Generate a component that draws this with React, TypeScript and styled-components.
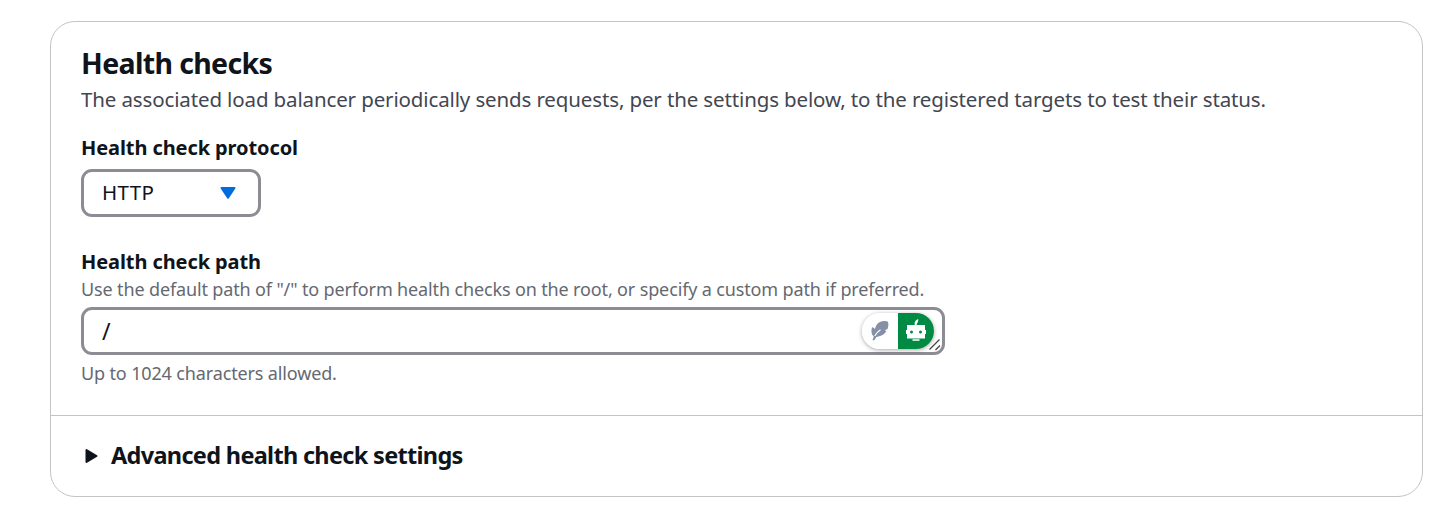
import React from 'react';
import styled, { createGlobalStyle } from 'styled-components';

const GlobalStyle = createGlobalStyle`
  * { box-sizing: border-box; }
  body {
    margin: 0;
    background: #fff;
    color: #0f141a;
    font-family: "Noto Sans", "Open Sans", sans-serif;
  }
`;

const Page = styled.main`
  padding: 21px 21px 18px 50px;
`;

const Panel = styled.section`
  height: 476px;
  display: flex;
  flex-direction: column;
  border: 1px solid #c3c4c7;
  border-radius: 25px;
`;

const Body = styled.div`
  height: 393px;
  padding: 23px 30px 0;
  display: flex;
  flex-direction: column;
  align-items: flex-start;
`;

const Title = styled.h2`
  margin: 0;
  font-size: 28.5px;
  line-height: 36px;
  font-weight: 700;
  white-space: nowrap;
  letter-spacing: -0.65px;
`;

const Description = styled.p`
  margin: 4px 0 0;
  font-size: 20.5px;
  line-height: 28px;
  color: #424650;
  white-space: nowrap;
  letter-spacing: -0.13px;
`;

const Label = styled.label<{ $top: number }>`
  margin-top: ${(p) => p.$top}px;
  font-size: 20px;
  line-height: 28px;
  font-weight: 700;
  white-space: nowrap;
  letter-spacing: -0.09px;
`;

const Hint = styled.span<{ $top: number }>`
  margin-top: ${(p) => p.$top}px;
  font-size: 18px;
  line-height: 24px;
  color: #656871;
  white-space: nowrap;
  letter-spacing: -0.14px;
`;

const Select = styled.button`
  width: 180px;
  height: 48px;
  margin: 7px 0 0;
  padding: 0 22px 0 18px;
  display: flex;
  align-items: center;
  justify-content: space-between;
  border: 3px solid #8c8c94;
  border-radius: 11px;
  background: #fff;
  color: #0f141a;
  font: 400 20.5px/28px "Noto Sans", "Open Sans", sans-serif;
  letter-spacing: 0.4px;
`;

const SelectText = styled.span`
  padding-bottom: 2px;
`;

const Field = styled.div`
  width: 864px;
  height: 48px;
  margin-top: 6px;
  padding: 0 8px 0 18px;
  display: flex;
  align-items: center;
  position: relative;
  border: 3px solid #8c8c94;
  border-radius: 11px;
`;

const Value = styled.span`
  flex: 1;
  font-size: 23px;
  line-height: 28px;
`;

const Assistant = styled.div`
  width: 72px;
  height: 36px;
  display: flex;
  overflow: hidden;
  border-radius: 18px;
  box-shadow: 0 1px 4px rgba(0, 0, 0, 0.35);
`;

const Half = styled.span<{ $fill: string }>`
  flex: 1;
  display: flex;
  align-items: center;
  justify-content: center;
  background: ${(p) => p.$fill};
`;

const Grip = styled.svg`
  position: absolute;
  right: 0;
  bottom: 0;
`;

const Footer = styled.div`
  flex: 1;
  padding: 0 34px;
  display: flex;
  align-items: center;
  gap: 13px;
  border-top: 1px solid #c3c4c7;
`;

const Expander = styled.h3`
  margin: 0;
  padding-bottom: 2px;
  font-size: 23.5px;
  line-height: 30px;
  font-weight: 700;
  white-space: nowrap;
  letter-spacing: -0.69px;
`;

export default function App() {
  return (
    <Page>
      <GlobalStyle />
      <Panel>
        <Body>
          <Title>Health checks</Title>
          <Description>
            The associated load balancer periodically sends requests, per the settings below, to the registered targets to test their status.
          </Description>
          <Label $top={21}>Health check protocol</Label>
          <Select>
            <SelectText>HTTP</SelectText>
            <svg width="16" height="14" viewBox="0 0 16 14">
              <path d="M1.500 2h13L8 11.800z" fill="#006ce0" stroke="#006ce0" strokeWidth="2" strokeLinejoin="round" />
            </svg>
          </Select>
          <Label $top={31}>Health check path</Label>
          <Hint $top={1}>Use the default path of "/" to perform health checks on the root, or specify a custom path if preferred.</Hint>
          <Field>
            <Value>/</Value>
            <Assistant>
              <Half $fill="#fff">
                <svg width="20" height="22" viewBox="0 0 20 22">
                  <path d="M9 2.500c3-1.500 6.500-1.800 9-.8.7 2.500.4 5-.6 7.500l-2.600.9 1.500 1.100c-1.500 2.500-4 4.500-7 5L6.500 17 4 20.500 2.500 20l1.300-3.500L2 14.500c-.8-3-.8-6 .5-7.500L5 9C5.500 6.500 6.500 4 9 2.500z" fill="#8590a6" />
                  <path d="M4.700 16C6 13.500 8 11.500 10.500 9.800" fill="none" stroke="#fff" strokeWidth="1.100" />
                </svg>
              </Half>
              <Half $fill="#018a43">
                <svg width="24" height="26" viewBox="0 0 24 26" fill="#fff">
                  <path d="M11 7.500C9.800 4.800 11.500 2 14.300 1c.2 3-1.300 4-2 6.500z" />
                  <rect x="3" y="7" width="18" height="13.500" />
                  <path d="M2 12h20v4H2zM8.500 21.300h7v1.500h-7z" />
                  <circle cx="7.500" cy="14" r="1.500" fill="#018a43" />
                  <circle cx="16.500" cy="14" r="1.500" fill="#018a43" />
                </svg>
              </Half>
            </Assistant>
            <Grip width="14" height="14" viewBox="0 0 14 14">
              <path d="M1.500 11.500l10-10M7.500 12l4.500-4.500" fill="none" stroke="#fff" strokeWidth="3.500" />
              <path d="M1.500 11.500l10-10M7.500 12l4.500-4.500" fill="none" stroke="#444" strokeWidth="1.300" />
            </Grip>
          </Field>
          <Hint $top={6}>Up to 1024 characters allowed.</Hint>
        </Body>
        <Footer>
          <svg width="13" height="16" viewBox="0 0 13 16">
            <path d="M1.500 2v12l10-6z" fill="#0f141a" stroke="#0f141a" strokeWidth="2" strokeLinejoin="round" />
          </svg>
          <Expander>Advanced health check settings</Expander>
        </Footer>
      </Panel>
    </Page>
  );
}
